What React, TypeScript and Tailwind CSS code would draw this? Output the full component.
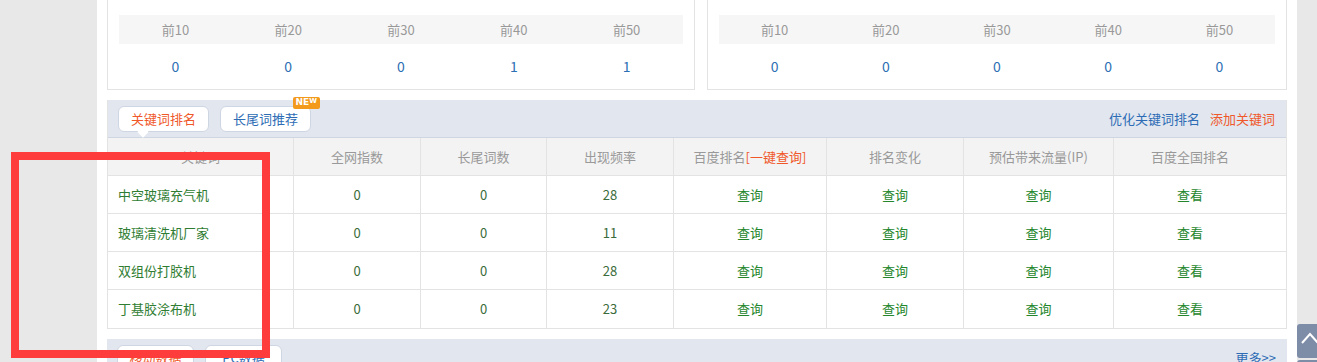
import React from "react";

const font = { fontFamily: '"Noto Sans CJK SC", "Noto Sans", sans-serif' };

const tops = ["前10", "前20", "前30", "前40", "前50"];

function StatPanel({ values, width }: { values: string[]; width: string }) {
  return (
    <div className={`${width} border-x border-b border-[#e3e3e3] bg-white px-[11px] pt-[15px]`}>
      <div className="grid grid-cols-5 h-[29px] bg-[#f6f6f6] items-center text-[13px] text-[#999]">
        {tops.map((t) => (
          <div key={t} className="text-center">{t}</div>
        ))}
      </div>
      <div className="grid grid-cols-5 h-[45px] items-center text-[14px] text-[#2d6fb4]">
        {values.map((v, i) => (
          <div key={i} className="text-center">{v}</div>
        ))}
      </div>
    </div>
  );
}

const rows = [
  ["中空玻璃充气机", "0", "0", "28"],
  ["玻璃清洗机厂家", "0", "0", "11"],
  ["双组份打胶机", "0", "0", "28"],
  ["丁基胶涂布机", "0", "0", "23"],
];

const cols = "grid grid-cols-[186px_127px_126px_127px_153px_137px_150px_174px]";

export default function App() {
  return (
    <div className="relative h-[362px] w-[1317px] overflow-hidden bg-[#e8e8e8] text-[13px]" style={font}>
      <div className="ml-[97px] h-full w-[1200px] bg-white px-[10px]">
        <div className="flex gap-[12px]">
          <StatPanel width="w-[588px]" values={["0", "0", "0", "1", "1"]} />
          <StatPanel width="w-[580px]" values={["0", "0", "0", "0", "0"]} />
        </div>

        <div className="mt-[10px] border border-[#e3e3e3] border-t-0">
          <div className="flex h-[38px] items-center justify-between bg-[#e1e6ef] pl-[10px] pr-[11px] border-b border-[#cfd6e3]">
            <div className="flex items-center gap-[11px]">
              <div className="relative flex h-[26px] w-[91px] items-center justify-center rounded-[6px] border border-[#cfd6e3] bg-white text-[#f0582a]">
                关键词排名
                <div className="absolute left-[20px] -bottom-[5px] h-[8px] w-[8px] rotate-45 bg-white"></div>
              </div>
              <div className="relative flex h-[26px] w-[91px] items-center justify-center rounded-[6px] border border-[#cfd6e3] bg-white text-[#2d6cb5]">
                长尾词推荐
                <div className="absolute -right-[10px] -top-[10px] flex h-[12px] items-center rounded-[2px] bg-[#f39a1c] px-[3px] text-[9px] font-bold leading-none text-white" style={{ fontFamily: '"DejaVu Sans", sans-serif' }}>
                  NE<span className="text-[7px] -mt-[3px]">W</span>
                </div>
              </div>
            </div>
            <div className="flex items-center gap-[10px]">
              <span className="text-[#2d6cb5]">优化关键词排名</span>
              <span className="text-[#f0582a]">添加关键词</span>
            </div>
          </div>

          <div className={`${cols} h-[38px] bg-[#f3f3f3] text-[#999] border-b border-[#e3e3e3]`}>
            {["关键词", "全网指数", "长尾词数", "出现频率"].map((h) => (
              <div key={h} className="flex items-center justify-center border-r border-[#e3e3e3]">{h}</div>
            ))}
            <div className="flex items-center justify-center border-r border-[#e3e3e3]">
              百度排名<span className="text-[#f0582a]">[一键查询]</span>
            </div>
            <div className="flex items-center justify-center border-r border-[#e3e3e3]">排名变化</div>
            <div className="flex items-center justify-center border-r border-[#e3e3e3]">预估带来流量(IP)</div>
            <div className="flex items-center justify-center pr-[22px]">百度全国排名</div>
          </div>

          {rows.map((r, ri) => (
            <div key={ri} className={`${cols} h-[38px] ${ri < rows.length - 1 ? "border-b border-[#e3e3e3]" : ""}`}>
              <div className="flex items-center pl-[10px] text-[#2f7d32] border-r border-[#e3e3e3]">{r[0]}</div>
              <div className="flex items-center justify-center text-[#3a6b3a] border-r border-[#e3e3e3]">{r[1]}</div>
              <div className="flex items-center justify-center text-[#3a6b3a] border-r border-[#e3e3e3]">{r[2]}</div>
              <div className="flex items-center justify-center text-[#3a6b3a] border-r border-[#e3e3e3]">{r[3]}</div>
              <div className="flex items-center justify-center text-[#23862b] border-r border-[#e3e3e3]">查询</div>
              <div className="flex items-center justify-center text-[#23862b] border-r border-[#e3e3e3]">查询</div>
              <div className="flex items-center justify-center text-[#23862b] border-r border-[#e3e3e3]">查询</div>
              <div className="flex items-center justify-center pr-[22px] text-[#23862b]">查看</div>
            </div>
          ))}
        </div>

        <div className="mt-[10px] flex h-[38px] items-start justify-between bg-[#e1e6ef] pl-[10px] pr-[11px] pt-[6px]">
          <div className="flex items-center gap-[11px]">
            <div className="flex h-[26px] w-[77px] items-center justify-center rounded-[6px] border border-[#cfd6e3] bg-white text-[#f0582a]">移动数据</div>
            <div className="flex h-[26px] w-[77px] items-center justify-center rounded-[6px] border border-[#cfd6e3] bg-white text-[#2d6cb5]">PC数据</div>
          </div>
          <span className="mt-[3px] text-[#2d6cb5]">更多&gt;&gt;</span>
        </div>
      </div>

      <div className="absolute left-[11px] top-[152px] h-[206px] w-[259px] border-[8px] border-[#ff3c3c]"></div>

      <div className="absolute left-[1297px] top-[324px] flex h-[34px] w-[34px] items-start justify-start rounded-[3px] bg-[#7d8ca7] pl-[4px] pt-[8px]">
        <svg width="18" height="12" viewBox="0 0 18 12" fill="none" stroke="white" strokeWidth="2">
          <path d="M1 11 L9 2 L17 11" />
        </svg>
      </div>
      <div className="absolute left-[1297px] top-[360px] h-[34px] w-[34px] rounded-[3px] bg-[#7d8ca7]"></div>
    </div>
  );
}
